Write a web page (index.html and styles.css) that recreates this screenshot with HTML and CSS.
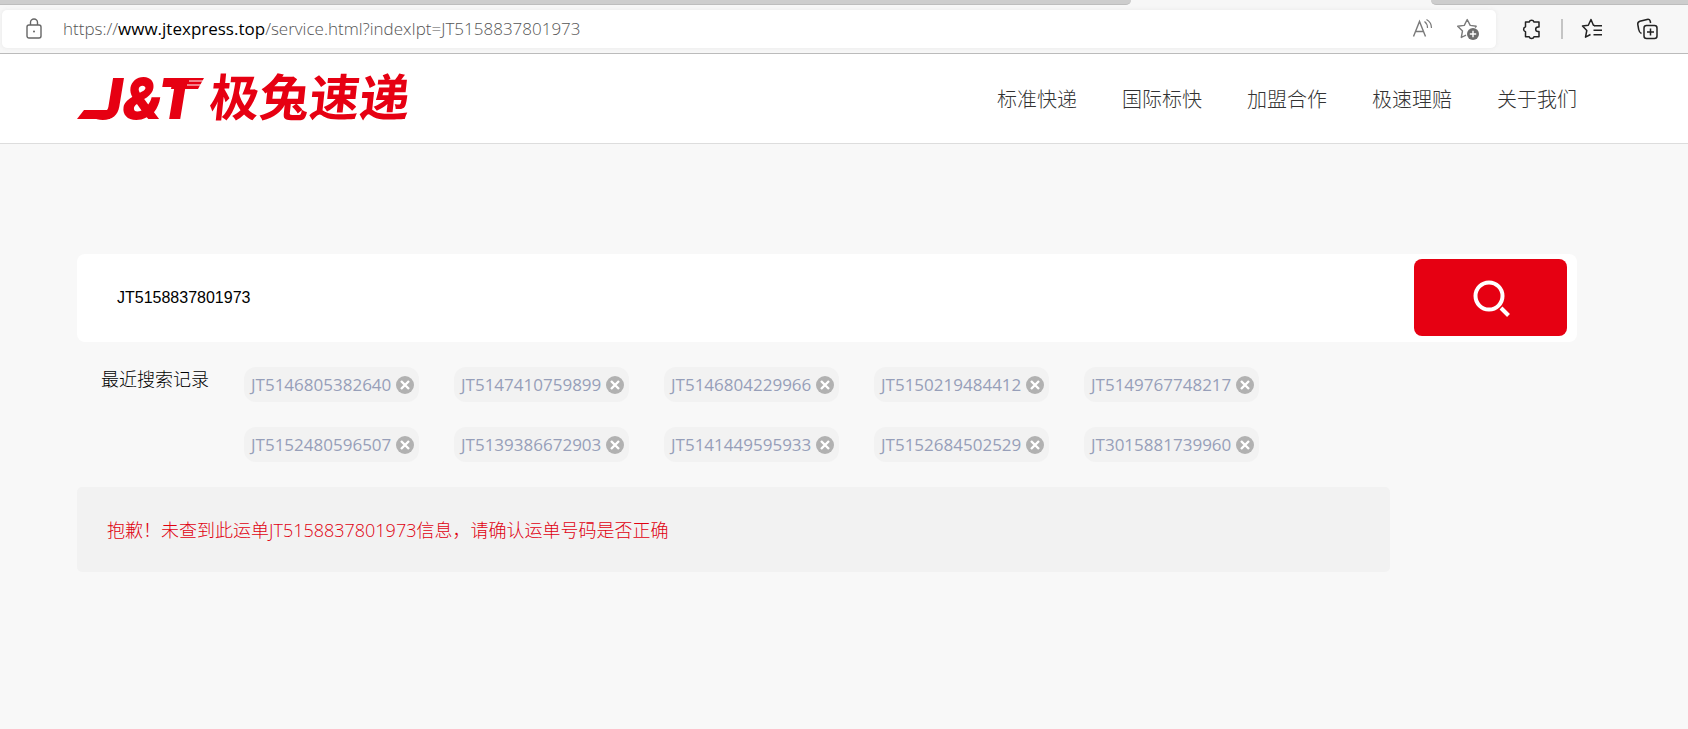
FILE: index.html
```html
<!DOCTYPE html>
<html lang="zh-CN">
<head>
    <meta charset="UTF-8">
    <meta name="viewport" content="width=device-width, initial-scale=1.0">
    <title>极兔速递</title>
    <link rel="stylesheet" href="styles.css">
</head>

<body>
    <!-- icon shared by all history tags -->
    <svg class="defs" aria-hidden="true">
        <symbol id="close" viewBox="0 0 18 18">
            <circle cx="9" cy="9" r="9" fill="#b1b1b1"/>
            <path d="M5 5l8 8M13 5l-8 8" stroke="#fff" stroke-width="2.4"/>
        </symbol>
    </svg>

    <!-- browser bar -->
    <div class="browser">
        <div class="tabs">
            <div class="tab tab-left"></div>
            <div class="tab tab-right"></div>
        </div>
        <div class="toolbar">
            <div class="address">
                <svg class="lock" width="16" height="22" viewBox="0 0 16 22" fill="none" stroke="#666" stroke-width="1.4">
                    <rect x="1" y="7" width="14" height="13" rx="2"/>
                    <path d="M4.500 7V4.500a3.500 3.500 0 0 1 7 0V7"/>
                    <circle cx="8" cy="13.500" r="1" fill="#666" stroke="none"/>
                </svg>
                <div class="url">https://<span class="host">www.jtexpress.top</span>/service.html?indexIpt=JT5158837801973</div>
                <div class="address-actions">
                    <button type="button" aria-label="Read aloud">
                        <svg width="22" height="24" viewBox="0 0 22 24" fill="none" stroke="#7a7a7a" stroke-width="1.4">
                            <path d="M1.500 19.500L7.500 4.500l6 15M3.500 14.500h8"/>
                            <path d="M12.500 4.500c2 1.500 3 3.500 3 6.500M14.500 2.500c3.500 2 5 5 5 8.500" stroke-width="1.200"/>
                        </svg>
                    </button>
                    <button type="button" aria-label="Add to favorites">
                        <svg width="24" height="24" viewBox="0 0 24 24" fill="none" stroke="#7a7a7a" stroke-width="1.4" stroke-linejoin="round">
                            <path d="M20.500 9.200L14.200 8.400 11.200 2.500 8.300 8.400 1.700 9.300l4.800 4.600L5.300 20.500l4.700-2.400"/>
                            <path d="M20.500 9.200l-1.500 1.300"/>
                            <circle cx="17" cy="17" r="6" fill="#6e6e6e" stroke="none"/>
                            <path d="M17 13.800v6.400M13.800 17h6.400" stroke="#fff"/>
                        </svg>
                    </button>
                </div>
            </div>
            <div class="tools">
                <button type="button" aria-label="Extensions">
                    <svg width="22" height="24" viewBox="0 0 22 24" fill="none" stroke="#222" stroke-width="1.500" stroke-linejoin="round">
                        <path d="M4.500 5h3.700a2.500 2.500 0 0 1 4.800 0h5v5h-1a2.300 2.300 0 0 0 0 4.600h1v5.200h-5a2.500 2.500 0 0 1-4.800 0H4.500v-5a2.600 2.600 0 0 1 0-5z"/>
                    </svg>
                </button>
                <span class="divider"></span>
                <button type="button" aria-label="Favorites">
                    <svg width="22" height="24" viewBox="0 0 22 24" fill="none" stroke="#222" stroke-width="1.500" stroke-linejoin="round">
                        <path d="M13.800 8.500L12.400 8.200 10 2.500 7.300 8.200 1.500 9l4.300 4.500-1.300 6.700L9.500 17.500"/>
                        <path d="M13 8.700h8M12.500 13.200h8.500M12.500 17.700h8.500"/>
                    </svg>
                </button>
                <button type="button" aria-label="Collections">
                    <svg width="24" height="24" viewBox="0 0 24 24" fill="none" stroke="#222" stroke-width="1.500" stroke-linejoin="round">
                        <rect x="8" y="8.500" width="13" height="13" rx="2.500"/>
                        <path d="M14.500 11.500v7M11 15h7"/>
                        <path d="M5.500 16.500C3.500 15.500 3 14.500 2.700 12.500L1.800 7.500C1.500 5.700 2.300 4.800 3.800 4.300L11 2.500c2-.500 3 .300 3.300 2l.300 1.500"/>
                    </svg>
                </button>
            </div>
        </div>
    </div>

    <header class="header">
        <a class="logo" href="#" aria-label="J&amp;T 极兔速递">
            <svg width="350" height="80" viewBox="0 0 350 80" fill="#e60012">
                <clipPath id="stem">
                    <path d="M33 10h327v60H0V52h27z"/>
                </clipPath>
                <!-- long foot in front of the J and the striped wing behind the T -->
                <path d="M7 51h26v9H0z"/>
                <text class="logo-en" clip-path="url(#stem)" x="12" y="60">J&amp;T</text>
                <path d="M96 19h31l-6 11H94z"/>
                <path d="M127 22h-15M124 26h-14" stroke="#fff"/>
                <text class="logo-cn" transform="skewX(-6)" x="137" y="57">极兔速递</text>
            </svg>
        </a>
        <nav class="nav">
            <a href="#">标准快递</a>
            <a href="#">国际标快</a>
            <a href="#">加盟合作</a>
            <a href="#">极速理赔</a>
            <a href="#">关于我们</a>
        </nav>
    </header>

    <main class="main">
        <form class="search">
            <input type="text" value="JT5158837801973" aria-label="运单号">
            <button type="button" aria-label="搜索">
                <svg width="38" height="38" viewBox="0 0 38 38" fill="none" stroke="#fff" stroke-width="4">
                    <circle cx="17" cy="17" r="13.500"/>
                    <path d="M29 29l7.500 7.500"/>
                </svg>
            </button>
        </form>

        <section class="history">
            <h2>最近搜索记录</h2>
            <ul>
                <li>JT5146805382640<button type="button" aria-label="删除"><svg width="18" height="18"><use href="#close"/></svg></button></li>
                <li>JT5147410759899<button type="button" aria-label="删除"><svg width="18" height="18"><use href="#close"/></svg></button></li>
                <li>JT5146804229966<button type="button" aria-label="删除"><svg width="18" height="18"><use href="#close"/></svg></button></li>
                <li>JT5150219484412<button type="button" aria-label="删除"><svg width="18" height="18"><use href="#close"/></svg></button></li>
                <li>JT5149767748217<button type="button" aria-label="删除"><svg width="18" height="18"><use href="#close"/></svg></button></li>
                <li>JT5152480596507<button type="button" aria-label="删除"><svg width="18" height="18"><use href="#close"/></svg></button></li>
                <li>JT5139386672903<button type="button" aria-label="删除"><svg width="18" height="18"><use href="#close"/></svg></button></li>
                <li>JT5141449595933<button type="button" aria-label="删除"><svg width="18" height="18"><use href="#close"/></svg></button></li>
                <li>JT5152684502529<button type="button" aria-label="删除"><svg width="18" height="18"><use href="#close"/></svg></button></li>
                <li>JT3015881739960<button type="button" aria-label="删除"><svg width="18" height="18"><use href="#close"/></svg></button></li>
            </ul>
        </section>

        <p class="result">抱歉！未查到此运单JT5158837801973信息，请确认运单号码是否正确</p>
    </main>
</body>

</html>
```
FILE: styles.css
```css
* {
    box-sizing: border-box;
}

body {
    margin: 0;
    min-height: 100vh;
    background-color: #f8f8f8;
    color: #222;
    font-family: "Open Sans", "Noto Sans CJK SC", sans-serif;
}

button {
    display: flex;
    align-items: center;
    justify-content: center;
    padding: 0;
    border: none;
    background: none;
    cursor: pointer;
}

.defs {
    display: none;
}

/* browser bar */
.browser {
    background-color: #f7f7f7;
    border-bottom: 1px solid #bbb;
}

.tabs {
    display: flex;
    justify-content: space-between;
    height: 5px;
}

.tab {
    background-color: #cdcdcd;
    border-bottom: 1px solid #bdbdbd;
}

.tab-left {
    width: 67%;
    border-bottom-right-radius: 5px;
}

.tab-right {
    width: 257px;
    border-bottom-left-radius: 5px;
}

.toolbar {
    display: flex;
    align-items: center;
    padding: 5px 28px 5px 2px;
}

.address {
    flex: 1;
    display: flex;
    align-items: center;
    height: 38px;
    padding: 0 16px 0 24px;
    border-radius: 5px;
    background-color: #fff;
    box-shadow: 0 0 4px #e8e8e8;
}

.url {
    flex: 1;
    margin-left: 21px;
    color: #555;
    font-size: 17px;
    font-weight: 300;
    line-height: 24px;
}

.host {
    color: #000;
    font-weight: 400;
}

.address-actions {
    display: flex;
    gap: 22px;
}

.tools {
    display: flex;
    align-items: center;
    margin-left: 25px;
}

.divider {
    width: 2px;
    height: 20px;
    margin: 0 18px;
    background-color: #c4c4c4;
}

.tools button:last-child {
    margin-left: 33px;
}

/* site header */
.header {
    display: flex;
    align-items: center;
    justify-content: space-between;
    height: 90px;
    padding: 0 111px 0 77px;
    background-color: #fff;
    border-bottom: 1px solid #ddd;
}

.logo svg {
    display: block;
}

.logo-en {
    font-family: Inter, sans-serif;
    font-size: 56px;
    font-weight: 900;
    font-style: italic;
}

.logo-cn {
    font-family: "Noto Sans CJK SC", sans-serif;
    font-size: 50px;
    font-weight: 700;
}

.nav {
    display: flex;
    gap: 45px;
}

.nav a {
    color: #333;
    font-size: 20px;
    font-weight: 300;
    text-decoration: none;
}

/* tracking search */
.main {
    padding: 110px 111px 0 77px;
}

.search {
    display: flex;
    height: 88px;
    padding: 5px 10px 6px 0;
    border-radius: 8px;
    background-color: #fff;
}

.search input {
    flex: 1;
    padding: 0 40px;
    border: none;
    outline: none;
    background: none;
    color: #000;
    font-family: "Liberation Sans", sans-serif;
    font-size: 16px;
}

.search button {
    width: 153px;
    border-radius: 8px;
    background-color: #e60012;
}

.history {
    display: flex;
    align-items: flex-start;
    margin-top: 25px;
    padding-left: 24px;
}

.history h2 {
    width: 143px;
    margin: 0;
    color: #000;
    font-size: 18px;
    font-weight: 300;
    line-height: 24px;
}

.history ul {
    display: grid;
    grid-template-columns: repeat(5, 175px);
    gap: 25px 35px;
    margin: 0;
    padding: 0;
    list-style-type: none;
}

.history li {
    display: flex;
    align-items: center;
    justify-content: space-between;
    height: 35px;
    padding: 0 5px 0 7px;
    border-radius: 12px;
    background-color: #f2f2f2;
    color: #979fb9;
    font-size: 17px;
}

.result {
    width: 87.5%;
    margin: 25px 0 0;
    padding: 30px 30px 29px;
    border-radius: 5px;
    background-color: #f2f2f2;
    color: #e00010;
    font-size: 18px;
    font-weight: 300;
    line-height: 26px;
}
```
